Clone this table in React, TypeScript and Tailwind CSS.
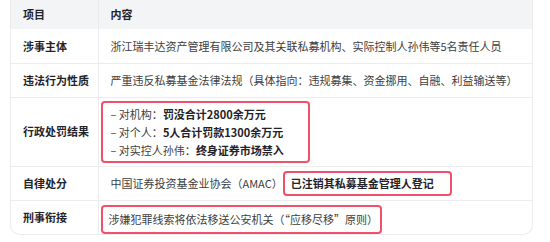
type Row = {
  label: string;
  height: string;
  content: React.ReactNode;
};

const box = "border-2 border-[#f0506a] rounded-[4px]";

const rows: Row[] = [
  {
    label: "涉事主体",
    height: "h-[34px]",
    content: <span>浙江瑞丰达资产管理有限公司及其关联私募机构、实际控制人孙伟等5名责任人员</span>,
  },
  {
    label: "违法行为性质",
    height: "h-[34px]",
    content: <span>严重违反私募基金法律法规（具体指向：违规募集、资金挪用、自融、利益输送等）</span>,
  },
  {
    label: "行政处罚结果",
    height: "h-[69px]",
    content: (
      <div className={`${box} w-[209px] -ml-[10px] pl-[8px] py-[2px] leading-[18px]`}>
        <div>
          – 对机构：<span className="font-bold text-[#1f2329]">罚没合计2800余万元</span>
        </div>
        <div>
          – 对个人：<span className="font-bold text-[#1f2329]">5人合计罚款1300余万元</span>
        </div>
        <div>
          – 对实控人孙伟：<span className="font-bold text-[#1f2329]">终身证券市场禁入</span>
        </div>
      </div>
    ),
  },
  {
    label: "自律处分",
    height: "h-[34px]",
    content: (
      <div className="flex items-center">
        <span>中国证券投资基金业协会（AMAC）</span>
        <span
          className={`${box} h-[25px] flex items-center pl-[6px] pr-[16px] font-bold text-[#1f2329]`}
        >
          已注销其私募基金管理人登记
        </span>
      </div>
    ),
  },
  {
    label: "刑事衔接",
    height: "h-[33px]",
    content: (
      <div
        className={`${box} -ml-[10px] w-fit h-[29px] mt-[4px] flex items-center pl-[6px] pr-[2px] whitespace-nowrap`}
      >
        涉嫌犯罪线索将依法移送公安机关（“应移尽移”原则）
      </div>
    ),
  },
];

const App = () => {
  return (
    <div
      className="w-[550px] h-[242px] bg-white overflow-hidden"
      style={{ fontFamily: '"Noto Sans CJK SC", "Noto Sans", sans-serif' }}
    >
      <div className="ml-[10px] w-[523px] border border-[#ececee] border-t-0 rounded-b-[10px] overflow-hidden">
        <table className="w-full border-collapse text-[11px] text-[#3d3d40] text-left">
          <thead className="bg-[#f3f4f6] text-[#1f2329]">
            <tr className="h-[29px]">
              <th className="w-[87px] pl-[12px] font-bold border-r border-[#ececee]">项目</th>
              <th className="pl-[12px] font-bold">内容</th>
            </tr>
          </thead>
          <tbody>
            {rows.map((row, i) => (
              <tr
                key={row.label}
                className={`${row.height} ${i > 0 ? "border-t border-[#ececee]" : ""}`}
              >
                <td className="pl-[12px] font-bold text-[#1f2329] border-r border-[#ececee] align-middle">
                  {row.label}
                </td>
                <td className={`pl-[12px] ${i === 4 ? "align-top" : "align-middle"}`}>
                  {row.content}
                </td>
              </tr>
            ))}
          </tbody>
        </table>
      </div>
    </div>
  );
};

export default App;
